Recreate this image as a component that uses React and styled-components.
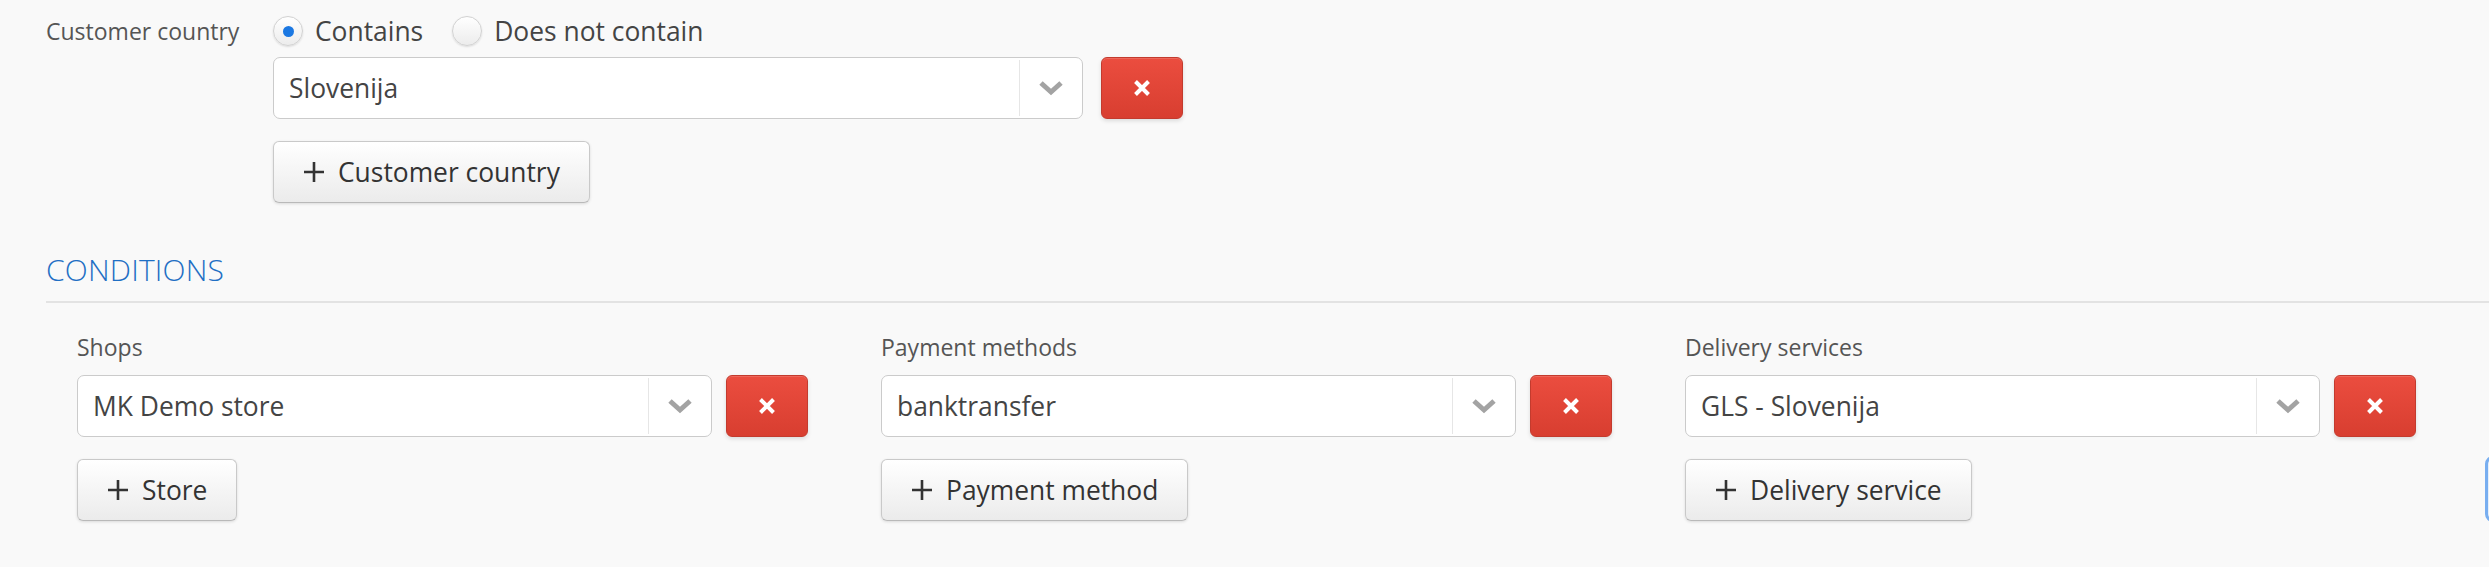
import React, { useState } from "react";
import styled, { createGlobalStyle } from "styled-components";

const GlobalStyle = createGlobalStyle`
  html, body {
    margin: 0;
    padding: 0;
    background: #f9f9f9;
    overflow: hidden;
  }
  body {
    font-family: "Open Sans", "Noto Sans", "Liberation Sans", sans-serif;
    color: #444;
  }
`;

const Page = styled.div`
  position: relative;
  width: 2489px;
  height: 567px;
  padding: 16px 0 0 46px;
  box-sizing: border-box;
  overflow: hidden;
`;

// horizontal form group: label on the left, controls on the right
const FilterRow = styled.div`
  display: grid;
  grid-template-columns: 227px 1fr;
  align-items: start;
`;

const RowLabel = styled.div`
  font-size: 23px;
  line-height: 30px;
  color: #555;
`;

const Controls = styled.div`
  display: flex;
  flex-direction: column;
  align-items: flex-start;
`;

const RadioGroup = styled.div`
  display: flex;
  align-items: center;
  height: 30px;
  margin-bottom: 11px;
`;

const RadioOption = styled.label`
  display: flex;
  align-items: center;
  gap: 12px;
  font-size: 26.4px;
  line-height: 30px;
  color: #444;
  margin-right: 29px;
  cursor: pointer;
`;

const RadioCircle = styled.span`
  width: 30px;
  height: 30px;
  box-sizing: border-box;
  border-radius: 50%;
  border: 1px solid #d2d2d2;
  background: linear-gradient(#ffffff, #ececec);
  box-shadow: 0 1px 2px rgba(0, 0, 0, 0.12);
  display: flex;
  align-items: center;
  justify-content: center;

  &::after {
    content: "";
    width: 11px;
    height: 11px;
    border-radius: 50%;
    background: ${(p) => (p.checked ? "#1b78e2" : "transparent")};
  }
`;

const SelectRow = styled.div`
  display: flex;
  align-items: center;
  gap: ${(p) => p.gap || 14}px;
`;

const SelectBox = styled.div`
  display: flex;
  align-items: stretch;
  width: ${(p) => p.width}px;
  height: 62px;
  box-sizing: border-box;
  background: #fff;
  border: 1.5px solid #cbcbcb;
  border-radius: 7px;
`;

const SelectValue = styled.div`
  flex: 1;
  display: flex;
  align-items: center;
  padding-left: 15px;
  font-size: 26.4px;
  color: #444;
`;

const SelectArrow = styled.div`
  width: 62px;
  margin: 2px 0;
  border-left: 1.5px solid #e6e6e6;
  display: flex;
  align-items: center;
  justify-content: center;
`;

const RemoveButton = styled.button`
  width: 82px;
  height: 62px;
  box-sizing: border-box;
  border: 1.5px solid #c33b2e;
  border-radius: 6px;
  background: linear-gradient(#eb4d3f, #d83e30);
  box-shadow: 0 2px 4px rgba(0, 0, 0, 0.12), inset 0 1px 0 rgba(255, 255, 255, 0.15);
  display: flex;
  align-items: center;
  justify-content: center;
  padding: 0;
  cursor: pointer;
`;

const AddButton = styled.button`
  margin-top: 22px;
  height: 62px;
  box-sizing: border-box;
  padding: 0 29px 0 30px;
  display: inline-flex;
  align-items: center;
  gap: 14px;
  border: 1.5px solid #c9c9c9;
  border-bottom-color: #b9b9b9;
  border-radius: 6px;
  background: linear-gradient(#ffffff, #ebebeb);
  box-shadow: 0 1px 3px rgba(0, 0, 0, 0.12);
  font-family: inherit;
  font-size: 26.4px;
  color: #333;
  cursor: pointer;
`;

const SectionTitle = styled.h2`
  margin: 46px 0 0 0;
  padding: 0 0 11px 0;
  border-bottom: 2px solid #e3e3e3;
  font-size: 30px;
  line-height: 41px;
  font-weight: 300;
  color: #1f6fc4;
  letter-spacing: 0.2px;
`;

const ConditionsGrid = styled.div`
  display: grid;
  grid-template-columns: repeat(3, 804px);
  padding: 29px 0 0 31px;
`;

const Column = styled.div`
  display: flex;
  flex-direction: column;
  align-items: flex-start;
`;

const ColumnLabel = styled.div`
  font-size: 23px;
  line-height: 31px;
  color: #555;
  margin-bottom: 12px;
`;

// floating save button, only its edge peeks in at the right
const FloatingSave = styled.button`
  position: absolute;
  left: 2485px;
  top: 456px;
  width: 220px;
  height: 66px;
  border: 3px solid #78aef0;
  border-radius: 8px;
  background: #e6f0fc;
`;

const Chevron = () => (
  <svg width="26" height="16" viewBox="0 0 26 16">
    <path d="M3 3 L13 12 L23 3" fill="none" stroke="#a3a3a3" strokeWidth="5" />
  </svg>
);

const CrossIcon = () => (
  <svg width="18" height="18" viewBox="0 0 18 18">
    <path d="M2.5 2.5 L15.5 15.5 M15.5 2.5 L2.5 15.5" stroke="#fff" strokeWidth="4" />
  </svg>
);

const PlusIcon = () => (
  <svg width="20" height="20" viewBox="0 0 20 20">
    <path d="M10 0 V20 M0 10 H20" stroke="#333" strokeWidth="2.6" />
  </svg>
);

const Select = ({ value, width }) => (
  <SelectBox width={width}>
    <SelectValue>{value}</SelectValue>
    <SelectArrow>
      <Chevron />
    </SelectArrow>
  </SelectBox>
);

const conditions = [
  { label: "Shops", value: "MK Demo store", add: "Store" },
  { label: "Payment methods", value: "banktransfer", add: "Payment method" },
  { label: "Delivery services", value: "GLS - Slovenija", add: "Delivery service" },
];

const App = () => {
  const [mode, setMode] = useState("contains");

  return (
    <Page>
      <GlobalStyle />

      <FilterRow>
        <RowLabel>Customer country</RowLabel>
        <Controls>
          <RadioGroup>
            <RadioOption onClick={() => setMode("contains")}>
              <RadioCircle checked={mode === "contains"} />
              Contains
            </RadioOption>
            <RadioOption onClick={() => setMode("not")}>
              <RadioCircle checked={mode === "not"} />
              Does not contain
            </RadioOption>
          </RadioGroup>
          <SelectRow gap={18}>
            <Select value="Slovenija" width={810} />
            <RemoveButton>
              <CrossIcon />
            </RemoveButton>
          </SelectRow>
          <AddButton>
            <PlusIcon />
            Customer country
          </AddButton>
        </Controls>
      </FilterRow>

      <SectionTitle>CONDITIONS</SectionTitle>

      <ConditionsGrid>
        {conditions.map((c) => (
          <Column key={c.label}>
            <ColumnLabel>{c.label}</ColumnLabel>
            <SelectRow>
              <Select value={c.value} width={635} />
              <RemoveButton>
                <CrossIcon />
              </RemoveButton>
            </SelectRow>
            <AddButton>
              <PlusIcon />
              {c.add}
            </AddButton>
          </Column>
        ))}
      </ConditionsGrid>

      <FloatingSave />
    </Page>
  );
};

export default App;
